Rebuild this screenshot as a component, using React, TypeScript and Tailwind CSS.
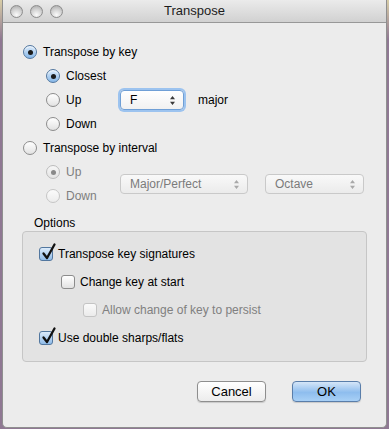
import type { ReactNode } from "react";

type Mark = { checked?: boolean; disabled?: boolean };

function Radio({ checked, disabled }: Mark) {
  const ring = disabled
    ? checked
      ? "border-[#bcbcbc] bg-[linear-gradient(#f7f7f7,#e4e4e4)]"
      : "border-[#c6c6c6] bg-[linear-gradient(#fbfbfb,#ececec)]"
    : checked
      ? "border-[#52779f] bg-[linear-gradient(#dcebfa,#86b7e8)] shadow-[inset_0_1px_1px_rgba(255,255,255,0.8)]"
      : "border-[#8c8c8c] bg-[linear-gradient(#ffffff,#e2e2e2)]";
  return (
    <span className={`flex h-[14px] w-[14px] shrink-0 items-center justify-center rounded-full border ${ring}`}>
      {checked && (
        <span className={`h-[5px] w-[5px] rounded-full ${disabled ? "bg-[#8a8a8a]" : "bg-[#1b1b1b]"}`} />
      )}
    </span>
  );
}

function Checkbox({ checked, disabled }: Mark) {
  const box = disabled
    ? "border-[#c4c4c4] bg-[linear-gradient(#fafafa,#ebebeb)]"
    : checked
      ? "border-[#52779f] bg-[linear-gradient(#dcebfa,#8fbbe8)]"
      : "border-[#8c8c8c] bg-[linear-gradient(#ffffff,#e2e2e2)]";
  return (
    <span className={`relative h-[14px] w-[14px] shrink-0 rounded-[3px] border ${box}`}>
      {checked && (
        <svg viewBox="0 0 16 18" className="absolute left-[1px] top-[-5px] h-[18px] w-[16px] overflow-visible">
          <path d="M2.5 10.5 L6 15 L13.5 1.5" fill="none" stroke="#111" strokeWidth="2.3" strokeLinecap="round" strokeLinejoin="round" />
        </svg>
      )}
    </span>
  );
}

function Arrows({ dim }: { dim?: boolean }) {
  return (
    <svg viewBox="0 0 7 11" className="h-[11px] w-[7px]">
      <path d="M3.5 1 L6 4.2 H1 Z M3.5 10 L6 6.8 H1 Z" fill={dim ? "#a8a8a8" : "#3a3a3a"} />
    </svg>
  );
}

function Popup({ label, width, disabled }: { label: string; width: string; disabled?: boolean }) {
  return (
    <div
      className={`flex h-[20px] ${width} items-center justify-between rounded-[4px] border pl-[9px] pr-[7px] ${
        disabled
          ? "border-[#c9c9c9] bg-[linear-gradient(#f9f9f9,#ebebeb)] text-[#7b7b7b]"
          : "border-[#6f9fd6] bg-[linear-gradient(#ffffff,#f1f1f1)] text-black shadow-[0_0_0_2px_#9cc3ef]"
      }`}
    >
      <span>{label}</span>
      <Arrows dim={disabled} />
    </div>
  );
}

function Row({ children, className = "" }: { children: ReactNode; className?: string }) {
  return <div className={`flex h-[24px] items-center ${className}`}>{children}</div>;
}

function CheckRow({ children, indent, ...mark }: Mark & { children: ReactNode; indent: string }) {
  return (
    <div className={`flex h-[28px] items-center gap-[5px] ${indent} ${mark.disabled ? "text-[#808080]" : ""}`}>
      <Checkbox {...mark} />
      <span>{children}</span>
    </div>
  );
}

export default function App() {
  return (
    <div className="h-[429px] w-[389px] bg-[linear-gradient(#d8cda7_0px,#8f7893_40px,#8f7893)] font-['Liberation_Sans',Arial,sans-serif] text-[12px] text-black">
      <div className="ml-[2px] flex h-[428px] w-[385px] flex-col overflow-hidden rounded-b-[5px] border-x border-b border-[#8f8f8f] bg-[#ececec]">
        {/* title bar */}
        <div className="relative flex h-[23px] shrink-0 items-center border-b border-[#989898] bg-[linear-gradient(#ebebeb,#d1d1d1)]">
          <div className="flex gap-[7px] pl-[7px]">
            {[0, 1, 2].map((i) => (
              <span
                key={i}
                className="h-[13px] w-[13px] rounded-full border border-[#8d8d8d] bg-[radial-gradient(circle_at_50%_80%,#fbfbfb_0%,#d0d0d0_55%,#a4a4a4_100%)]"
              />
            ))}
          </div>
          <span className="absolute left-0 right-0 text-center text-[13px] text-[#1c1c1c]">Transpose</span>
        </div>

        {/* transpose mode */}
        <div className="pl-[20px] pt-[17px]">
          <Row className="gap-[6px]">
            <Radio checked />
            <span>Transpose by key</span>
          </Row>
          <div className="pl-[23px]">
            <Row className="gap-[6px]">
              <Radio checked />
              <span>Closest</span>
            </Row>
            <Row>
              <div className="flex w-[74px] items-center gap-[6px]">
                <Radio />
                <span>Up</span>
              </div>
              <Popup label="F" width="w-[64px]" />
              <span className="ml-[14px]">major</span>
            </Row>
            <Row className="gap-[6px]">
              <Radio />
              <span>Down</span>
            </Row>
          </div>
          <Row className="gap-[6px]">
            <Radio />
            <span>Transpose by interval</span>
          </Row>
          <div className="flex items-center pl-[23px] text-[#7e7e7e]">
            <div className="w-[74px]">
              <Row className="gap-[6px]">
                <Radio checked disabled />
                <span>Up</span>
              </Row>
              <Row className="gap-[6px]">
                <Radio disabled />
                <span>Down</span>
              </Row>
            </div>
            <div className="flex gap-[17px]">
              <Popup label="Major/Perfect" width="w-[128px]" disabled />
              <Popup label="Octave" width="w-[99px]" disabled />
            </div>
          </div>
        </div>

        {/* options */}
        <div className="pl-[19px] pt-[8px]">
          <div className="h-[15px] pl-[12px] leading-[15px]">Options</div>
          <div className="w-[345px] rounded-[4px] border border-[#c6c6c6] bg-[#e3e3e3] pb-[9px] pt-[8px]">
            <CheckRow checked indent="pl-[16px]">Transpose key signatures</CheckRow>
            <CheckRow indent="pl-[38px]">Change key at start</CheckRow>
            <CheckRow disabled indent="pl-[60px]">Allow change of key to persist</CheckRow>
            <CheckRow checked indent="pl-[16px]">Use double sharps/flats</CheckRow>
          </div>
        </div>

        {/* buttons */}
        <div className="flex justify-end gap-[26px] pr-[25px] pt-[19px]">
          <button
            type="button"
            className="h-[21px] w-[69px] rounded-[4px] border border-[#8e8e8e] bg-[linear-gradient(#ffffff,#ececec)] text-[13px] shadow-[0_1px_1px_rgba(0,0,0,0.15)]"
          >
            Cancel
          </button>
          <button
            type="button"
            className="h-[21px] w-[69px] rounded-[4px] border border-[#5a7eaa] bg-[linear-gradient(#d5e6f8,#8ebdee_55%,#a8d0f6)] text-[13px] shadow-[0_1px_1px_rgba(0,0,0,0.15)]"
          >
            OK
          </button>
        </div>
      </div>
    </div>
  );
}
